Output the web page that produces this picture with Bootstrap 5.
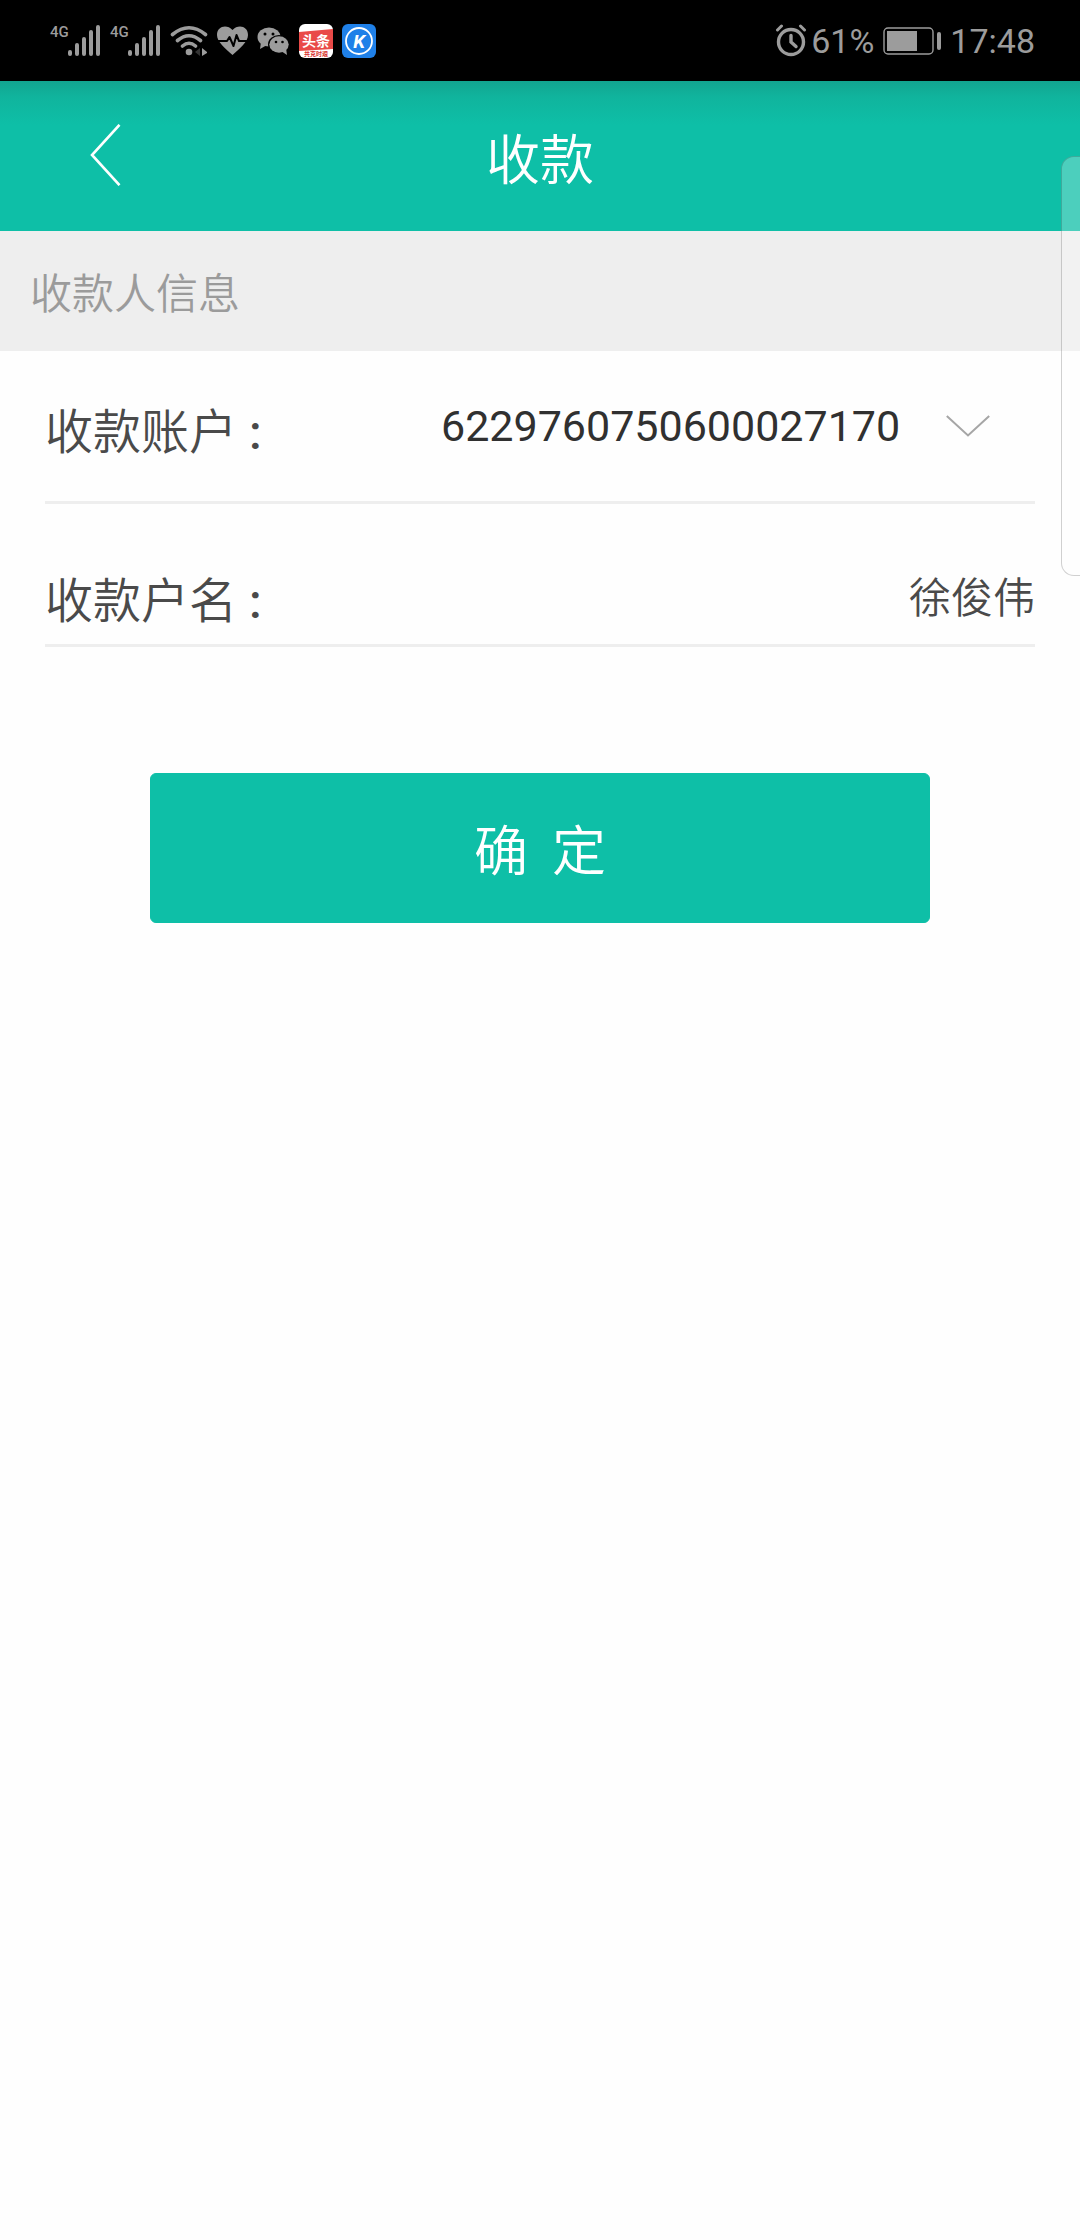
<!DOCTYPE html>
<html lang="zh-CN">
<head>
<meta charset="utf-8">
<meta name="viewport" content="width=device-width, initial-scale=1">
<title>收款</title>
<link href="https://cdn.jsdelivr.net/npm/bootstrap@5.3.0/dist/css/bootstrap.min.css" rel="stylesheet">
<style>
  :root { --teal: #0ebfa7; --rule: #eeeeee; --sys: #9c9c9c; }
  body { font-family: Roboto, "Noto Sans CJK SC", sans-serif; font-size: 42px; line-height: 60px; color: #4a4a4a; background: #fefefe; }
  .sysbar { height: 81px; padding: 0 45px 0 50px; background: #000; color: var(--sys); font-size: 34px; line-height: 40px; }
  .sys-left { gap: 9px; }
  .sys-right { gap: 9px; }
  .alarm-group { gap: 4px; }
  .sysbar svg { display: block; flex: none; }
  .net-tag { font: 500 15px/16px Roboto, sans-serif; width: 18px; }
  .signal { width: 51px; height: 34px; }
  .topbar { height: 150px; background: linear-gradient(#12a590 0, #10b49d 16px, var(--teal) 44px); color: #fff; }
  .cjk { font-family: "Noto Sans CJK SC DemiLight", "Noto Sans CJK SC", sans-serif; font-weight: 350; }
  .topbar h1 { font-size: 54px; line-height: 60px; padding-top: 2px; }
  .back-link { padding: 42px 40px 44px 90px; }
  .side { flex: 1 1 0; }
  .group-title { padding: 30px; background: #eeeeee; color: #9b9b9b; font-size: 42px; line-height: 60px; }
  .form-area { padding: 0 45px; }
  .line-item { border-bottom: 3px solid var(--rule); }
  .line-item label { font-size: 48px; line-height: 60px; padding-top: 4px; }
  .line-item label span { font-family: Roboto, sans-serif; font-weight: 500; line-height: 1; }
  .item-account { padding: 43px 45px 43px 0; }
  .item-name { padding: 59px 0 17px; }
  .account-select { appearance: none; border: 0; background: transparent; color: #303030; font-size: 43px; line-height: 60px; padding: 0; }
  .pick { gap: 45px; }
  .name-field { font-size: 42px; line-height: 60px; color: #4a4a4a; padding: 0; border: 0; }
  .action-area { padding: 126px 150px 0; }
  .btn-teal { --bs-btn-bg: var(--teal); --bs-btn-color: #fff; --bs-btn-border-color: var(--teal); --bs-btn-hover-bg: #0cae98; --bs-btn-hover-color: #fff; --bs-btn-active-bg: #0a9c88; --bs-btn-active-color: #fff; border-radius: 6px; font-size: 54px; line-height: 60px; padding: 44px 0; }
  .edge-panel { position: absolute; right: -16px; top: 156px; width: 35px; height: 420px; border: 1px solid rgba(0,0,0,.18); border-radius: 13px; background: rgba(255,255,255,.26); }
</style>
</head>
<body>
<div class="position-relative overflow-hidden min-vh-100">
  <div class="sysbar d-flex justify-content-between align-items-center">
    <div class="sys-left d-flex align-items-center">
      <div class="signal d-flex align-items-start">
        <span class="net-tag">4G</span>
        <svg width="33" height="34" viewBox="0 0 33 34" stroke="#9c9c9c" stroke-width="4" stroke-linecap="round"><path d="M2 28v2M9 21v9M16 15v15M23 8v22M30 3v27"/></svg>
      </div>
      <div class="signal d-flex align-items-start">
        <span class="net-tag">4G</span>
        <svg width="33" height="34" viewBox="0 0 33 34" stroke="#9c9c9c" stroke-width="4" stroke-linecap="round"><path d="M2 28v2M9 21v9M16 15v15M23 8v22M30 3v27"/></svg>
      </div>
      <svg width="38" height="34" viewBox="0 0 38 34" fill="none" stroke="#9c9c9c" stroke-width="3.600" stroke-linecap="round">
        <path d="M2.500 10.500Q19-3 35.500 10.500M7.500 16.500Q19 7 30.500 16.500M12.500 22Q19 16.500 25.500 22"/>
        <circle cx="19" cy="28" r="3.300" fill="#9c9c9c" stroke="none"/>
        <path d="M30 24v8l-5-4z" fill="#333" stroke="none"/><path d="M32 24l5 4v1l-5 3z" fill="#9c9c9c" stroke="none"/>
      </svg>
      <svg width="31" height="34" viewBox="0 0 31 34">
        <path d="M15.500 6C10 0 0 2 0 11c0 7 8 13 15.500 20C23 24 31 18 31 11 31 2 21 0 15.500 6z" fill="#9c9c9c"/>
        <path d="M0 17h10l2.500-4 4 9 3-11 2.500 6h9" fill="none" stroke="#000" stroke-width="2" stroke-linejoin="round"/>
      </svg>
      <svg width="33" height="34" viewBox="0 0 33 34">
        <g fill="#9c9c9c"><ellipse cx="12" cy="13" rx="11.500" ry="9.500"/><path d="M4 18l-1 7 7-4z"/></g>
        <ellipse cx="22" cy="20.500" rx="11" ry="9.500" fill="#000"/>
        <g fill="#9c9c9c"><ellipse cx="22" cy="20.500" rx="9.700" ry="8.200"/><path d="M24 27l6 4-1-7z"/></g>
        <g fill="#000"><circle cx="8" cy="10" r="1.500"/><circle cx="16" cy="10" r="1.500"/><circle cx="19" cy="18" r="1.300"/><circle cx="25.500" cy="18" r="1.300"/></g>
      </svg>
      <svg width="34" height="34" viewBox="0 0 34 34">
        <rect width="34" height="34" rx="6" fill="#fff"/><path d="M0 8l34-3v20L0 27z" fill="#e94a48"/>
        <text x="17" y="22" text-anchor="middle" fill="#fff" font-family="Noto Sans CJK SC, sans-serif" font-weight="700" font-size="14">头条</text>
        <text x="17" y="32" text-anchor="middle" fill="#d8302e" font-family="Noto Sans CJK SC, sans-serif" font-weight="700" font-size="6">共克时艰</text>
      </svg>
      <svg width="34" height="34" viewBox="0 0 34 34">
        <rect width="34" height="34" rx="6" fill="#1f80e8"/><circle cx="17" cy="17" r="13" fill="none" stroke="#fff" stroke-width="1.800"/>
        <text x="17" y="23.500" text-anchor="middle" fill="#fff" font-family="Roboto, sans-serif" font-weight="700" font-style="italic" font-size="19">K</text>
      </svg>
    </div>
    <div class="sys-right d-flex align-items-center">
      <div class="alarm-group d-flex align-items-center">
        <svg width="32" height="34" viewBox="0 0 32 34" fill="none" stroke="#9c9c9c" stroke-width="3.400" stroke-linecap="round">
          <circle cx="16" cy="18" r="12.500"/><path d="M16 11.500V18l5 4.500"/><path d="M2.500 6l4-4M29.500 6l-4-4" stroke-width="3"/>
        </svg>
        <span>61%</span>
      </div>
      <svg width="58" height="28" viewBox="0 0 58 28"><rect x="1" y="1" width="49" height="26" rx="4" fill="none" stroke="#9c9c9c" stroke-width="1.400"/><rect x="4" y="4" width="30" height="20" fill="#9c9c9c"/><rect x="54" y="5" width="4" height="18" rx="2" fill="#9c9c9c"/></svg>
      <span>17:48</span>
    </div>
  </div>

  <header class="topbar d-flex align-items-center">
    <div class="side d-flex">
      <a href="#" class="back-link" aria-label="返回"><svg class="d-block" width="31" height="62" viewBox="0 0 31 62" fill="none" stroke="#fff" stroke-width="2.600"><path d="M29.500 .8L2 31l27.500 30.200"/></svg></a>
    </div>
    <h1 class="cjk m-0">收款</h1>
    <div class="side"></div>
  </header>

  <main>
    <h2 class="cjk group-title m-0">收款人信息</h2>
    <form>
      <div class="form-area">
        <div class="line-item item-account d-flex justify-content-between align-items-center">
          <label for="account" class="cjk">收款账户<span> :</span></label>
          <div class="pick d-flex align-items-center">
            <select id="account" class="account-select"><option>6229760750600027170</option></select>
            <svg width="44" height="22" viewBox="0 0 44 22" fill="none" stroke="#a6a6a6" stroke-width="2"><path d="M.8 1L22 20.500 43.200 1"/></svg>
          </div>
        </div>
        <div class="line-item item-name d-flex justify-content-between align-items-center">
          <label for="payee" class="cjk text-nowrap">收款户名<span> :</span></label>
          <input id="payee" class="cjk name-field form-control-plaintext text-end" type="text" value="徐俊伟" readonly>
        </div>
      </div>
      <div class="action-area">
        <button type="button" class="cjk btn btn-teal w-100">确&nbsp;&nbsp;定</button>
      </div>
    </form>
  </main>
  <div class="edge-panel"></div>
</div>
<script src="https://cdn.jsdelivr.net/npm/bootstrap@5.3.0/dist/js/bootstrap.bundle.min.js"></script>
</body>
</html>
